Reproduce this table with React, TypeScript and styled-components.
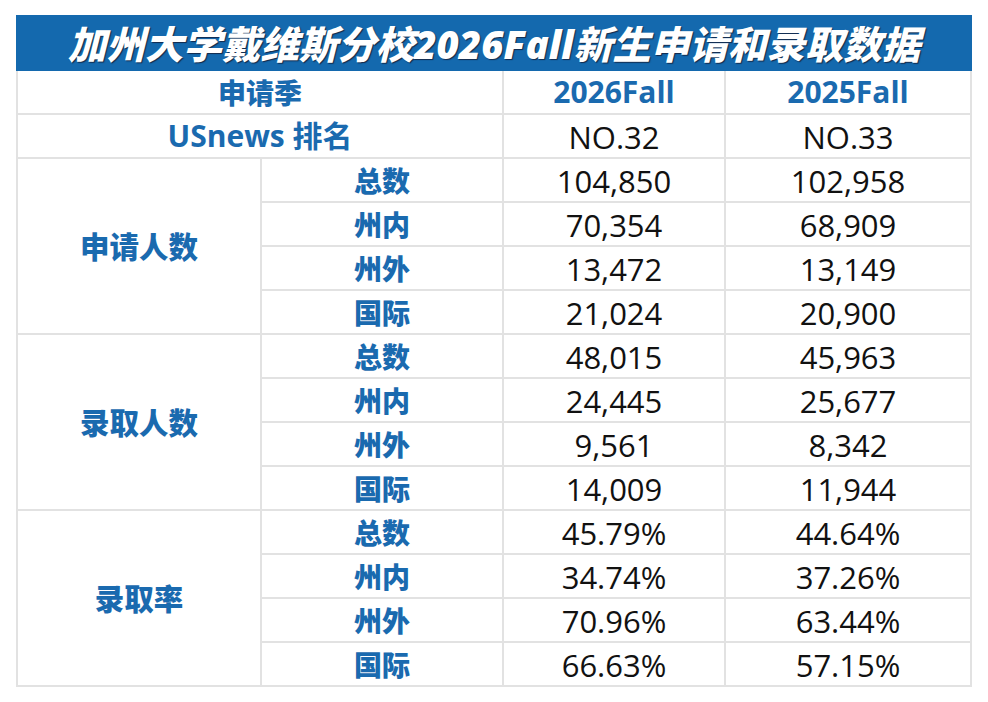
import React from "react";
import styled, { createGlobalStyle } from "styled-components";

const Global = createGlobalStyle`
  html, body { margin: 0; padding: 0; background: #ffffff; }
  body { font-family: "Open Sans", "Noto Sans CJK SC", sans-serif; }
`;

const Page = styled.div`
  padding: 15px 0 0 16px;
`;

const Sheet = styled.div`
  width: 956px;
  display: flex;
  flex-direction: column;
`;

const TitleBar = styled.div`
  height: 56px;
  background: #1469ae;
  display: flex;
  align-items: center;
  justify-content: center;
`;

const Title = styled.h1`
  margin: 0;
  font-family: "Open Sans", "Noto Sans CJK SC", sans-serif;
  font-size: 38.5px;
  font-weight: 900;
  font-style: italic;
  color: #ffffff;
  text-shadow: 1px 1px 1px rgba(20, 20, 40, 0.75);
  line-height: 1;
  padding-top: 2px;
`;

const Grid = styled.div`
  display: grid;
  grid-template-columns: 242px 240px 220px 244px;
  grid-auto-rows: 42px;
  gap: 2px;
  padding: 0 2px 2px 2px;
  background: #e2e2e2;
`;

type Kind = "head" | "label" | "group" | "value";

const sizes: Record<Kind, string> = {
  head: "30px",
  label: "28px",
  group: "29.5px",
  value: "31px",
};

const Cell = styled.div<{ $col?: string; $row?: string; $kind: Kind }>`
  background: #ffffff;
  grid-column: ${(p) => p.$col ?? "auto"};
  grid-row: ${(p) => p.$row ?? "auto"};
  display: flex;
  align-items: center;
  justify-content: center;
  white-space: nowrap;
  line-height: 1;
  color: ${(p) => (p.$kind === "value" ? "#111111" : "#1a6aaf")};
  font-weight: ${(p) => (p.$kind === "value" ? 400 : p.$kind === "head" ? 700 : 900)};
  font-size: ${(p) => sizes[p.$kind]};
  font-family: ${(p) =>
    p.$kind === "label" || p.$kind === "group"
      ? `"Noto Sans CJK SC", sans-serif`
      : `"Open Sans", "Noto Sans CJK SC", sans-serif`};
  padding-top: ${(p) => (p.$kind === "value" ? "2px" : "0")};
`;

type Group = { name: string; rows: [string, string, string][] };

const groups: Group[] = [
  {
    name: "申请人数",
    rows: [
      ["总数", "104,850", "102,958"],
      ["州内", "70,354", "68,909"],
      ["州外", "13,472", "13,149"],
      ["国际", "21,024", "20,900"],
    ],
  },
  {
    name: "录取人数",
    rows: [
      ["总数", "48,015", "45,963"],
      ["州内", "24,445", "25,677"],
      ["州外", "9,561", "8,342"],
      ["国际", "14,009", "11,944"],
    ],
  },
  {
    name: "录取率",
    rows: [
      ["总数", "45.79%", "44.64%"],
      ["州内", "34.74%", "37.26%"],
      ["州外", "70.96%", "63.44%"],
      ["国际", "66.63%", "57.15%"],
    ],
  },
];

export default function App() {
  return (
    <Page>
      <Global />
      <Sheet>
        <TitleBar>
          <Title>加州大学戴维斯分校2026Fall新生申请和录取数据</Title>
        </TitleBar>
        <Grid>
          <Cell $kind="label" $col="1 / 3" $row="1">申请季</Cell>
          <Cell $kind="head" $col="3" $row="1">2026Fall</Cell>
          <Cell $kind="head" $col="4" $row="1">2025Fall</Cell>
          <Cell $kind="head" $col="1 / 3" $row="2">USnews 排名</Cell>
          <Cell $kind="value" $col="3" $row="2">NO.32</Cell>
          <Cell $kind="value" $col="4" $row="2">NO.33</Cell>
          {groups.map((g, gi) => {
            const start = 3 + gi * 4;
            return (
              <React.Fragment key={g.name}>
                <Cell $kind="group" $col="1" $row={`${start} / span 4`}>
                  {g.name}
                </Cell>
                {g.rows.map((r, ri) => (
                  <React.Fragment key={r[0]}>
                    <Cell $kind="label" $col="2" $row={`${start + ri}`}>{r[0]}</Cell>
                    <Cell $kind="value" $col="3" $row={`${start + ri}`}>{r[1]}</Cell>
                    <Cell $kind="value" $col="4" $row={`${start + ri}`}>{r[2]}</Cell>
                  </React.Fragment>
                ))}
              </React.Fragment>
            );
          })}
        </Grid>
      </Sheet>
    </Page>
  );
}
